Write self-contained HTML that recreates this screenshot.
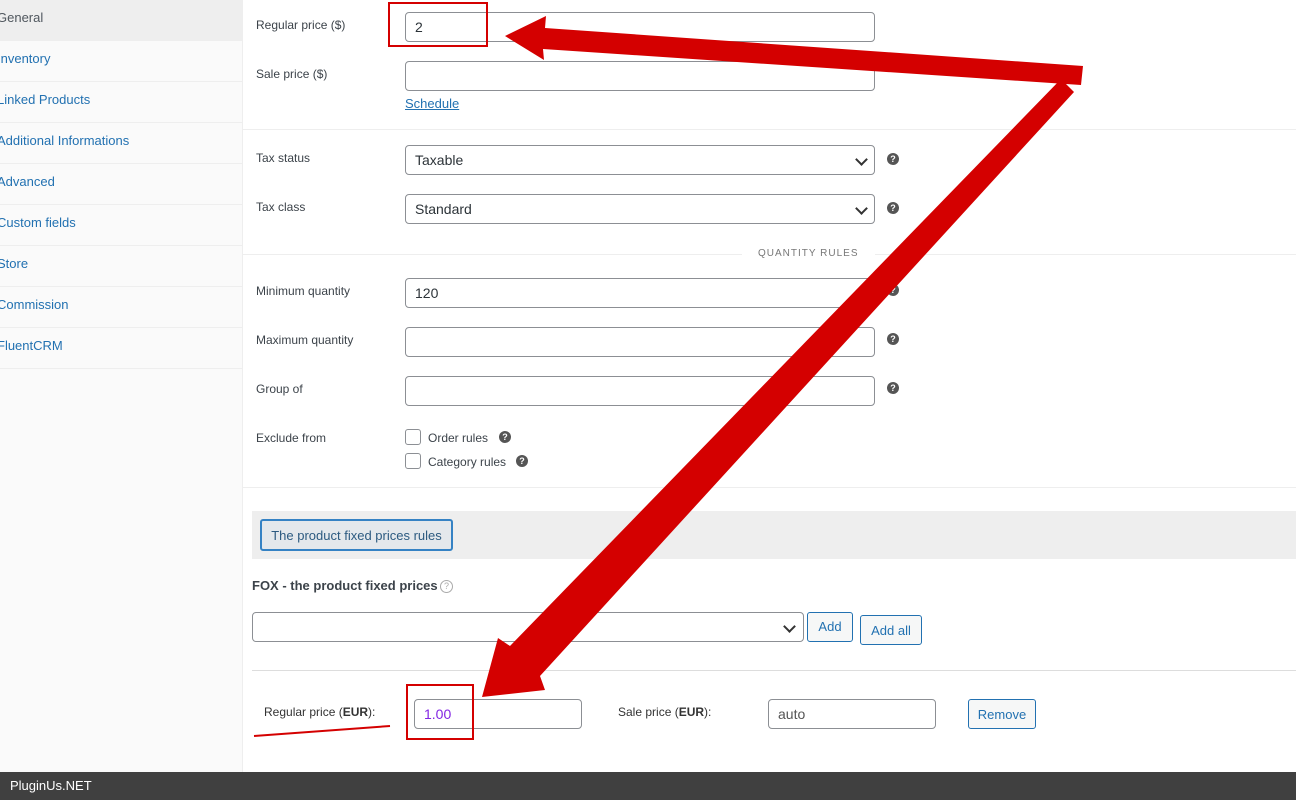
<!DOCTYPE html>
<html><head><style>
body{margin:0;width:1296px;height:800px;position:relative;overflow:hidden;font-family:"Liberation Sans",sans-serif;background:#fff;font-size:13px;color:#3c434a}
.side{position:absolute;left:0;top:0;width:242px;height:772px;background:#fafafa;border-right:1px solid #eee}
.side div{height:40px;border-bottom:1px solid #eee;line-height:36px;color:#2271b1;text-indent:-3px}
.side div.a{background:#eee;color:#50575e}
.a2{position:absolute;font-size:12px;color:#3c434a}
.in{position:absolute;border:1px solid #8c8f94;border-radius:4px;background:#fff;box-sizing:border-box;font-size:14px;padding-left:9px;line-height:28px;color:#2c3338}
.hr{position:absolute;left:243px;right:0;height:1px;background:#eee}
.q{position:absolute;width:12px;height:12px;border-radius:50%;background:#555;color:#fff;font-size:9px;font-weight:bold;text-align:center;line-height:12px}
.cb{position:absolute;width:14px;height:14px;border:1px solid #8c8f94;border-radius:3px;background:#fff}
.btn{position:absolute;border:1px solid #2271b1;border-radius:3px;background:#f6f7f7;color:#2271b1;font-size:13px;text-align:center;box-sizing:border-box}
.chev{position:absolute;width:7px;height:7px;border-right:2px solid #333;border-bottom:2px solid #333;transform:rotate(45deg)}
.red{position:absolute;border:2px solid #d40000;box-sizing:border-box}
</style></head><body>
<div class="side">
<div class="a">General</div><div>Inventory</div><div>Linked Products</div><div>Additional Informations</div><div>Advanced</div><div>Custom fields</div><div>Store</div><div>Commission</div><div>FluentCRM</div>
</div>
<div class="a2" style="left:256px;top:18px">Regular price ($)</div>
<div class="in" style="left:405px;top:12px;width:470px;height:30px">2</div>
<div class="a2" style="left:256px;top:67px">Sale price ($)</div>
<div class="in" style="left:405px;top:61px;width:470px;height:30px"></div>
<div style="position:absolute;left:405px;top:96px;color:#2271b1;text-decoration:underline">Schedule</div>
<div class="hr" style="top:129px"></div>
<div class="a2" style="left:256px;top:151px">Tax status</div>
<div class="in" style="left:405px;top:145px;width:470px;height:30px">Taxable</div><div class="chev" style="left:857px;top:155px"></div>
<div class="q" style="left:887px;top:153px">?</div>
<div class="a2" style="left:256px;top:200px">Tax class</div>
<div class="in" style="left:405px;top:194px;width:470px;height:30px">Standard</div><div class="chev" style="left:857px;top:204px"></div>
<div class="q" style="left:887px;top:202px">?</div>
<div class="hr" style="top:254px"></div>
<div style="position:absolute;left:742px;top:248px;background:#fff;padding:0 16px;font-size:10px;letter-spacing:1px;color:#777">QUANTITY RULES</div>
<div class="a2" style="left:256px;top:284px">Minimum quantity</div>
<div class="in" style="left:405px;top:278px;width:470px;height:30px">120</div><div class="q" style="left:887px;top:284px">?</div>
<div class="a2" style="left:256px;top:333px">Maximum quantity</div>
<div class="in" style="left:405px;top:327px;width:470px;height:30px"></div><div class="q" style="left:887px;top:333px">?</div>
<div class="a2" style="left:256px;top:382px">Group of</div>
<div class="in" style="left:405px;top:376px;width:470px;height:30px"></div><div class="q" style="left:887px;top:382px">?</div>
<div class="a2" style="left:256px;top:431px">Exclude from</div>
<div class="cb" style="left:405px;top:429px"></div><div class="a2" style="left:428px;top:431px">Order rules</div><div class="q" style="left:499px;top:431px">?</div>
<div class="cb" style="left:405px;top:453px"></div><div class="a2" style="left:428px;top:455px">Category rules</div><div class="q" style="left:516px;top:455px">?</div>
<div class="hr" style="top:487px"></div>
<div style="position:absolute;left:252px;top:511px;right:0;height:48px;background:#eee"></div>
<div class="btn" style="left:260px;top:519px;width:193px;height:32px;line-height:30px;border-width:2px;border-color:#3582c4;background:#e4e8ec;color:#2c5a80">The product fixed prices rules</div>
<div style="position:absolute;left:252px;top:578px;font-weight:bold;color:#3c434a">FOX - the product fixed prices</div>
<div style="position:absolute;left:440px;top:580px;width:11px;height:11px;border:1px solid #aaa;border-radius:50%;font-size:9px;color:#aaa;text-align:center;line-height:11px">?</div>
<div class="in" style="left:252px;top:612px;width:552px;height:30px"></div><div class="chev" style="left:785px;top:622px"></div>
<div class="btn" style="left:807px;top:612px;width:46px;height:30px;line-height:28px">Add</div>
<div class="btn" style="left:860px;top:615px;width:62px;height:30px;line-height:30px">Add all</div>
<div style="position:absolute;left:252px;right:0;top:670px;height:1px;background:#ddd"></div>
<div class="a2" style="left:264px;top:705px;color:#333">Regular price (<b>EUR</b>):</div>
<div class="in" style="left:414px;top:699px;width:168px;height:30px;color:#8224e3">1.00</div>
<div class="a2" style="left:618px;top:705px;color:#333">Sale price (<b>EUR</b>):</div>
<div class="in" style="left:768px;top:699px;width:168px;height:30px;color:#555">auto</div>
<div class="btn" style="left:968px;top:699px;width:68px;height:30px;line-height:29px">Remove</div>
<div class="red" style="left:388px;top:2px;width:100px;height:45px"></div>
<div class="red" style="left:406px;top:684px;width:68px;height:56px"></div>
<svg style="position:absolute;left:0;top:0" width="1296" height="800">
<line x1="254" y1="736" x2="390" y2="726" stroke="#d40000" stroke-width="2"/>
<polygon fill="#d40000" points="1083,66 1081,85 543,49 544,60 505,36 546,16 545,28"/>
<polygon fill="#d40000" points="1061,79 1074,92 540,676 545,690 482,697 498,638 510,646"/>
</svg>
<div style="position:absolute;left:0;top:772px;width:1296px;height:28px;background:#404040;color:#fff;font-size:13px;line-height:28px;padding-left:10px">PluginUs.NET</div>
</body></html>
